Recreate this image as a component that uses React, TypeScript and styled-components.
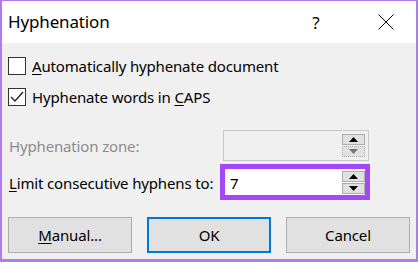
import React from 'react'
import styled, { createGlobalStyle } from 'styled-components'

const GlobalStyle = createGlobalStyle`
  html, body { margin:0; padding:0; background:#fff; }
  body { font-family:"Noto Sans","Open Sans","Liberation Sans",sans-serif; }
`

const Window = styled.div`
  width:418px;
  height:262px;
  box-sizing:border-box;
  border:2px solid #b27af2;
  border-top-width:1px;
  border-bottom-width:3px;
  display:flex;
  flex-direction:column;
  background:#f0f0f0;
  overflow:hidden;
  letter-spacing:-0.15px;
`

const TitleBar = styled.div`
  height:42px;
  flex-shrink:0;
  background:#fff;
  display:flex;
  align-items:center;
  padding:0 18px 0 6px;
  gap:46px;
  color:#000;
`

const Title = styled.span`
  flex:1;
  font-size:17px;
  margin-top:-1px;
`

const TitleBtn = styled.button`
  width:24px;
  height:42px;
  border:none;
  background:none;
  padding:0;
  display:flex;
  align-items:center;
  justify-content:center;
  font-family:inherit;
  font-size:17px;
  color:#000;
`

const Body = styled.div`
  flex:1;
  display:flex;
  flex-direction:column;
  padding:13px 6px 0 4px;
`

const CheckRow = styled.label`
  display:flex;
  align-items:center;
  height:20px;
  gap:6px;
  font-size:15px;
  color:#000;
  margin-bottom:11px;
`

const Box = styled.span`
  width:18px;
  height:18px;
  box-sizing:border-box;
  border:1px solid #333;
  background:#fff;
  display:flex;
  align-items:center;
  justify-content:center;
  margin-left:2px;
`

const U = styled.span`
  text-decoration:underline;
  text-underline-offset:2px;
`

const FieldRow = styled.div`
  display:flex;
  align-items:center;
  justify-content:space-between;
  margin-top:${p => p.$mt}px;
`

const FieldLabel = styled.span`
  font-size:15px;
  padding-left:3px;
  color:${p => p.$disabled ? '#8c8c8c' : '#000'};
`

const Field = styled.div`
  position:relative;
  width:146px;
  height:31px;
  box-sizing:border-box;
  border:1px solid ${p => p.$disabled ? '#c8c8c8' : '#b4b4b4'};
  background:${p => p.$disabled ? '#f0f0f0' : '#fff'};
  display:flex;
  align-items:center;
  padding:0 3px 0 6px;
  margin-right:41px;
`

const FieldValue = styled.span`
  flex:1;
  font-size:15px;
  color:#000;
`

const Spinner = styled.div`
  width:23px;
  display:flex;
  flex-direction:column;
  gap:1px;
`

const SpinBtn = styled.div`
  height:11px;
  box-sizing:border-box;
  border:1px ${p => p.$dotted ? 'dotted' : 'solid'} #adadad;
  background:#e1e1e1;
  display:flex;
  align-items:center;
  justify-content:center;
`

const Highlight = styled.div`
  position:absolute;
  left:-4px;
  top:-4px;
  right:-2px;
  bottom:-3px;
  border:5px solid #a447f7;
  pointer-events:none;
`

const ButtonRow = styled.div`
  display:flex;
  justify-content:space-between;
  margin-top:19px;
  padding-left:2px;
`

const Btn = styled.button`
  width:124px;
  height:36px;
  box-sizing:border-box;
  background:#e1e1e1;
  border:${p => p.$primary ? '2px solid #0078d7' : '1px solid #adadad'};
  font-family:inherit;
  font-size:15px;
  letter-spacing:inherit;
  color:#000;
  padding:0;
`

const Arrow = ({ down, color }: { down?: boolean; color: string }) => (
  <svg width="9" height="5" viewBox="0 0 9 5">
    <polygon points={down ? '0,0 9,0 4.5,5' : '0,5 9,5 4.5,0'} fill={color} />
  </svg>
)

const Check = () => (
  <svg width="14" height="12" viewBox="0 0 14 12">
    <polyline points="1,6 5,10 13,1" fill="none" stroke="#222" strokeWidth="1.3" />
  </svg>
)

const CloseIcon = () => (
  <svg width="16" height="16" viewBox="0 0 16 16">
    <path d="M0.5 0.5 L15.5 15.5 M15.5 0.5 L0.5 15.5" stroke="#000" strokeWidth="1" />
  </svg>
)

export default function App() {
  return (
    <>
      <GlobalStyle />
      <Window>
        <TitleBar>
          <Title>Hyphenation</Title>
          <TitleBtn>?</TitleBtn>
          <TitleBtn><CloseIcon /></TitleBtn>
        </TitleBar>
        <Body>
          <CheckRow>
            <Box />
            <span><U>A</U>utomatically hyphenate document</span>
          </CheckRow>
          <CheckRow>
            <Box><Check /></Box>
            <span>Hyphenate words in <U>C</U>APS</span>
          </CheckRow>
          <FieldRow $mt={12}>
            <FieldLabel $disabled>Hyphenation zone:</FieldLabel>
            <Field $disabled>
              <FieldValue />
              <Spinner>
                <SpinBtn><Arrow color="#000" /></SpinBtn>
                <SpinBtn $dotted><Arrow down color="#777" /></SpinBtn>
              </Spinner>
            </Field>
          </FieldRow>
          <FieldRow $mt={6}>
            <FieldLabel><U>L</U>imit consecutive hyphens to:</FieldLabel>
            <Field>
              <FieldValue>7</FieldValue>
              <Spinner>
                <SpinBtn><Arrow color="#000" /></SpinBtn>
                <SpinBtn><Arrow down color="#000" /></SpinBtn>
              </Spinner>
              <Highlight />
            </Field>
          </FieldRow>
          <ButtonRow>
            <Btn><U>M</U>anual...</Btn>
            <Btn $primary>OK</Btn>
            <Btn>Cancel</Btn>
          </ButtonRow>
        </Body>
      </Window>
    </>
  )
}
